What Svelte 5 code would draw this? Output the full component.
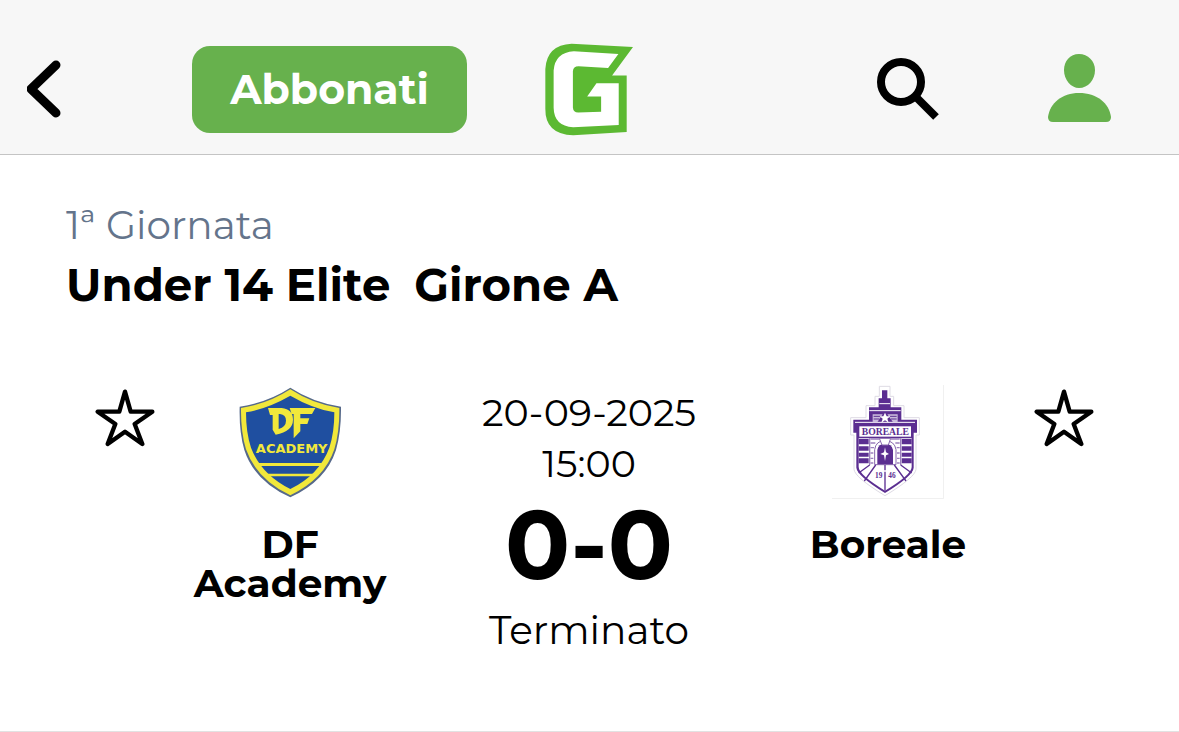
<script lang="ts">
	type Team = { name: string; crest: 'df' | 'boreale' };

	const match = {
		round: '1ª Giornata',
		category: 'Under 14 Elite',
		group: 'Girone A',
		date: '20-09-2025',
		time: '15:00',
		score: '0-0',
		status: 'Terminato'
	};

	const home: Team = { name: 'DF Academy', crest: 'df' };
	const away: Team = { name: 'Boreale', crest: 'boreale' };

	let favourites: Record<string, boolean> = $state({});

	function toggleFavourite(team: Team) {
		favourites[team.name] = !favourites[team.name];
	}
</script>

{#snippet star(team: Team)}
	<button
		class="icon-button star"
		class:active={favourites[team.name]}
		aria-label={`Segui ${team.name}`}
		aria-pressed={!!favourites[team.name]}
		onclick={() => toggleFavourite(team)}
	>
		<svg width="60" height="58" viewBox="0 0 180 174" aria-hidden="true">
			<path
				d="M90 8L107 68H172L119 105L142 165L90 128L38 165L61 105L8 68H73Z"
				stroke="currentColor"
				stroke-width="13"
				stroke-linejoin="round"
			/>
		</svg>
	</button>
{/snippet}

{#snippet dfCrest()}
	<svg width="104" height="112" viewBox="40 36 312 336" role="img" aria-label="DF Academy">
		<path
			d="M197 38Q264 82 349 95Q350 170 334 225Q304 318 197 367Q89 318 59 225Q43 170 45 95Q129 82 197 38Z"
			fill="#56698a"
		/>
		<path
			d="M197 43Q264 87 344 99Q345 170 329 223Q299 312 197 361Q95 312 64 223Q48 170 49 99Q129 87 197 43Z"
			fill="#f1e83b"
		/>
		<path
			d="M197 62Q264 101 329 112Q329 174 314 218Q284 299 197 342Q110 299 79 218Q64 174 64 112Q129 101 197 62Z"
			fill="#1f4fa0"
		/>
		<path d="M99 264H295L288 273H105ZM126 296H267L258 304H135Z" fill="#f1e83b" />
		<path
			d="M130 99H171Q205 103 205 134Q205 169 153 179L144 164V120H136ZM162 117V162Q184 155 184 137Q184 119 166 117ZM195 99H272L262 117H227V130H254L248 147H227V169L207 190V117H201Z"
			fill="#f1e83b"
			fill-rule="evenodd"
		/>
		<text class="df-name" x="201" y="235" text-anchor="middle">ACADEMY</text>
	</svg>
{/snippet}

{#snippet borealeCrest()}
	<svg width="112" height="114" viewBox="24 30 336 342" role="img" aria-label="Boreale">
		<path d="M359 30V371H24" fill="none" stroke="#eeeeee" stroke-width="3" />
		<path
			d="M166 34H198V64H209V92H240V128H286V180H276V283Q274 307 183 362Q92 307 90 283V180H80V128H126V92H153V64H166Z"
			fill="#ffffff"
			stroke="#dedbe4"
			stroke-width="3"
		/>
		<path
			d="M174 46H190V70H200V97H232V134H279V173H269V278Q268 302 183 354Q99 302 97 278V173H88V134H135V97H164V70H174Z"
			fill="#5b2e91"
		/>
		<path d="M166 86H198M136 107H230M93 142H273" stroke="#ffffff" stroke-width="3" />
		<path d="M146 118L176 118L160 142H146ZM190 118H221V142H207Z" fill="#cabbdc" />
		<path d="M149 124H170M149 132H166M197 124H218M201 132H218" stroke="#5b2e91" stroke-width="3" />
		<path d="M183 113L188 124H199L190 131L194 143L183 136L172 143L176 131L167 124H178Z" fill="#ffffff" />
		<rect x="106" y="154" width="155" height="31" fill="#ffffff" />
		<path d="M104 190H263V276Q263 299 183 347Q104 299 104 276Z" fill="#ffffff" />
		<path
			d="M104 192H134V208H104ZM104 214H134V227H104ZM104 233H134V245H104ZM104 250H134V265H104ZM233 192H263V208H233ZM233 214H263V227H233ZM233 233H263V245H233ZM233 250H263V265H233Z"
			fill="#5b2e91"
		/>
		<path
			d="M140 192H166M140 204H154M140 218H150M140 234H148M140 250H148M140 264H148M201 192H227M214 204H227M218 218H227M219 234H227M219 250H227M219 264H227M137 190V270M230 190V270"
			stroke="#9c80bd"
			stroke-width="4"
		/>
		<path d="M152 269V224Q155 198 183 196Q212 198 216 224V269Z" fill="#ffffff" stroke="#8767ad" stroke-width="3" />
		<path d="M160 268V225Q163 206 183 206Q203 206 207 225V268Z" fill="#5b2e91" />
		<path d="M166 190H200L193 210H174Z" fill="#ffffff" stroke="#8767ad" stroke-width="3" />
		<path d="M183 217L186 232L195 237L186 241L183 258L180 241L169 237L180 232Z" fill="#ffffff" />
		<path
			d="M155 270L121 318M137 270L104 294M183 270V286M183 290V347M211 270L246 318M230 270L263 294"
			fill="none"
			stroke="#5b2e91"
			stroke-width="4"
		/>
		<text class="boreale-name" x="184" y="179" text-anchor="middle">BOREALE</text>
		<text class="boreale-year" x="164" y="310" text-anchor="middle">19</text>
		<text class="boreale-year" x="204" y="310" text-anchor="middle">46</text>
	</svg>
{/snippet}

{#snippet side(team: Team)}
	<div class="team">
		<div class="crest">
			{#if team.crest === 'df'}
				{@render dfCrest()}
			{:else}
				{@render borealeCrest()}
			{/if}
		</div>
		<h2>{team.name}</h2>
	</div>
{/snippet}

<header class="topbar">
	<button class="icon-button back" aria-label="Indietro">
		<svg width="34" height="58" viewBox="0 0 34 58" fill="none" aria-hidden="true">
			<path d="M29 5L4 29L29 53" stroke="currentColor" stroke-width="9" stroke-linecap="round" stroke-linejoin="round" />
		</svg>
	</button>
	<a class="subscribe" href="#abbonati">Abbonati</a>
	<a class="logo" href="#home" aria-label="Home">
		<svg width="88" height="93" viewBox="45 38 265 278" aria-hidden="true">
			<path
				d="M125 39L310 49L247 135H291V305L130 315Q45 312 46 235V115Q50 43 125 39Z"
				fill="#5cb932"
			/>
			<path
				d="M132 62L266 70L235 112L146 107Q130 107 129 122V231Q130 246 145 246L214 244V198H172L200 158H267V284L130 291Q72 287 71 232V120Q75 66 132 62Z"
				fill="#ffffff"
			/>
		</svg>
	</a>
	<button class="icon-button" aria-label="Cerca">
		<svg width="63" height="63" viewBox="0 0 63 63" fill="none" stroke="currentColor" aria-hidden="true">
			<circle cx="24" cy="24" r="20" stroke-width="8" />
			<path d="M38 38L59 59" stroke-width="8" />
		</svg>
	</button>
	<button class="icon-button user" aria-label="Profilo">
		<svg width="63" height="70" viewBox="0 0 63 70" fill="currentColor" aria-hidden="true">
			<path d="M31 0C40 0 47 7 47 16C47 26 40 34 31 34C23 34 16 26 16 16C16 7 22 0 31 0Z" />
			<path d="M31 39C49 39 61 49 63 63Q63 68 58 68H5Q0 68 0 63C2 49 14 39 31 39Z" />
		</svg>
	</button>
</header>

<main>
	<div class="heading">
		<p>{match.round}</p>
		<h1>
			<span>{match.category}</span>
			<span>{match.group}</span>
		</h1>
	</div>

	<section class="match">
		{@render star(home)}
		{@render side(home)}
		<div class="result">
			<time datetime="2025-09-20T15:00">
				<span>{match.date}</span>
				<span>{match.time}</span>
			</time>
			<strong>{match.score}</strong>
			<span class="status">{match.status}</span>
		</div>
		{@render side(away)}
		{@render star(away)}
	</section>
</main>

<style>
	:global(body) {
		margin: 0;
		background: #ffffff;
		color: #000000;
		font-family: Montserrat, Inter, 'Liberation Sans', sans-serif;
	}

	.topbar {
		display: grid;
		grid-template-columns: 192fr 353fr 332fr 171fr 131fr;
		align-items: center;
		justify-items: start;
		padding: 24px 0 0;
		height: 130px;
		background: #f7f7f7;
		border-bottom: 1px solid #c4c4c4;
	}

	.icon-button {
		display: flex;
		padding: 0;
		border: 0;
		background: none;
		color: #000000;
		cursor: pointer;
	}

	.back {
		margin-left: 27px;
	}

	.subscribe {
		box-sizing: border-box;
		min-width: 275px;
		padding: 16px 24px 17px;
		border-radius: 18px;
		background: #67b14d;
		color: #ffffff;
		font-size: 41px;
		font-weight: 700;
		line-height: 54px;
		text-align: center;
		text-decoration: none;
	}

	.logo {
		display: flex;
	}

	.user {
		color: #67b14d;
	}

	main {
		padding-bottom: 72px;
		border-bottom: 1px solid #e2e2e2;
	}

	.heading {
		padding: 44px 66px 0;
	}

	.heading p {
		margin: 0;
		color: #64748b;
		font-size: 39px;
		font-weight: 400;
		line-height: 52px;
	}

	h1 {
		display: flex;
		flex-wrap: wrap;
		column-gap: 24px;
		margin: 4px 0 0;
		font-size: 45px;
		font-weight: 700;
		line-height: 60px;
	}

	.match {
		display: grid;
		grid-template-columns: 118fr 212fr 386fr 212fr 140fr;
		align-items: start;
		justify-items: center;
		padding: 70px 45px 0 66px;
	}

	.star {
		margin-top: 4px;
	}

	.star svg {
		fill: none;
	}

	.star.active svg {
		fill: currentColor;
	}

	.team {
		text-align: center;
	}

	.crest {
		display: flex;
		align-items: flex-end;
		justify-content: center;
		height: 114px;
	}

	h2 {
		margin: 26px 0 0;
		font-size: 39px;
		font-weight: 700;
		line-height: 39px;
	}

	.result {
		display: flex;
		flex-direction: column;
		align-items: center;
	}

	.result time {
		display: flex;
		flex-direction: column;
		align-items: center;
		padding-top: 2px;
		font-size: 38px;
		line-height: 51px;
	}

	.result strong {
		font-size: 96px;
		font-weight: 700;
		line-height: 112px;
	}

	.status {
		font-size: 39px;
		line-height: 58px;
	}

	.df-name {
		fill: #f1e83b;
		font-family: 'DejaVu Sans', sans-serif;
		font-size: 39px;
		font-weight: 700;
	}

	.boreale-name {
		fill: #5b2e91;
		font-family: 'Liberation Serif', serif;
		font-size: 29px;
		font-weight: 700;
	}

	.boreale-year {
		fill: #5b2e91;
		font-family: 'Liberation Serif', serif;
		font-size: 22px;
		font-weight: 700;
	}
</style>
